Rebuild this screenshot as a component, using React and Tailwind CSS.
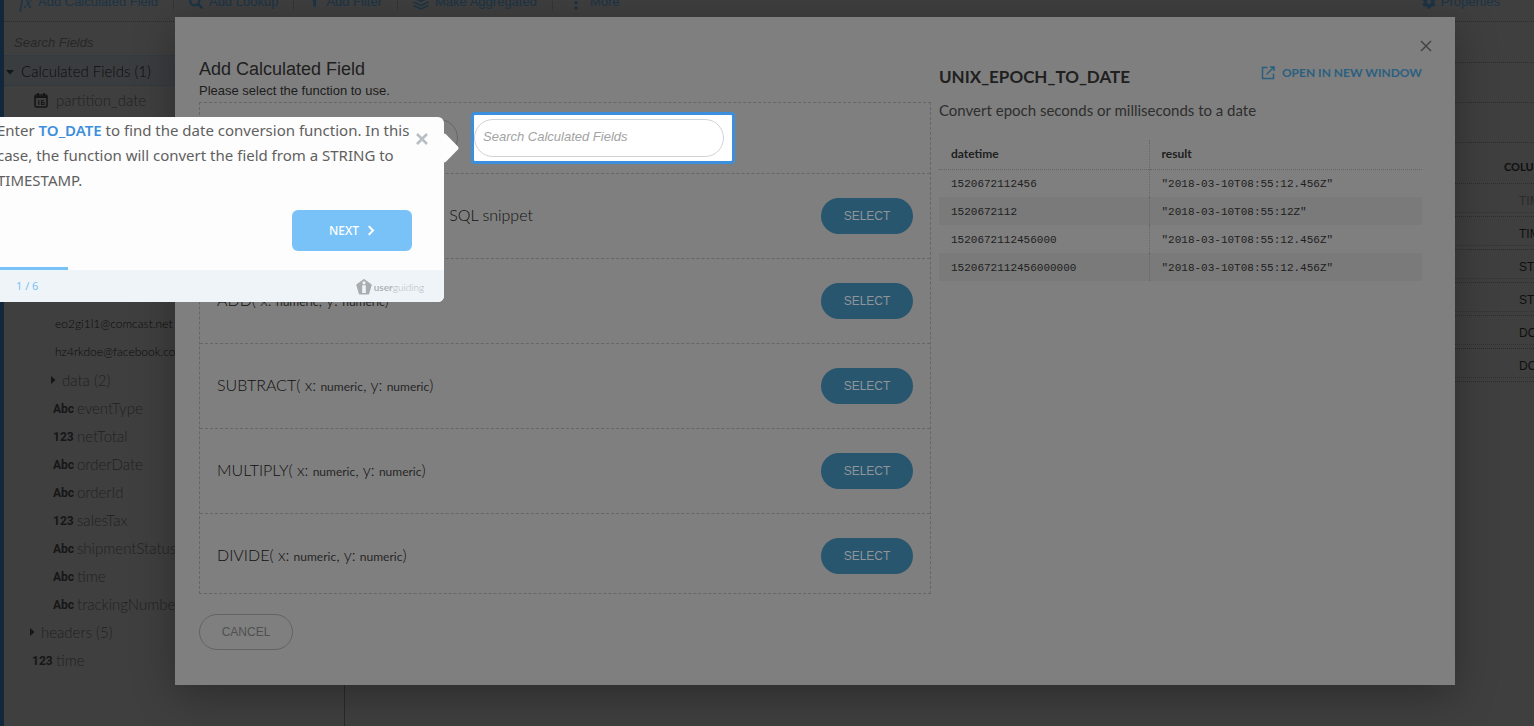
import React from "react";
import { FaCog, FaSearch, FaFilter } from "react-icons/fa";

const toolbarItems = [
  { label: "Add Calculated Field", icon: "fx" },
  { label: "Add Lookup", icon: "search" },
  { label: "Add Filter", icon: "filter" },
  { label: "Make Aggregated", icon: "layers" },
  { label: "More", icon: "more" },
];

const nestedFields = [
  { type: "Abc", name: "eventType" },
  { type: "123", name: "netTotal" },
  { type: "Abc", name: "orderDate" },
  { type: "Abc", name: "orderId" },
  { type: "123", name: "salesTax" },
  { type: "Abc", name: "shipmentStatus" },
  { type: "Abc", name: "time" },
  { type: "Abc", name: "trackingNumber" },
];

const columnTypes = ["TIMESTAMP", "STRING", "STRING", "DOUBLE", "DOUBLE"];

const functions = ["ADD", "SUBTRACT", "MULTIPLY", "DIVIDE"];

const samples = [
  ["1520672112456", '"2018-03-10T08:55:12.456Z"'],
  ["1520672112", '"2018-03-10T08:55:12Z"'],
  ["1520672112456000", '"2018-03-10T08:55:12.456Z"'],
  ["1520672112456000000", '"2018-03-10T08:55:12.456Z"'],
];

function ToolbarIcon({ name }) {
  if (name === "fx") {
    return <span className="font-['Liberation_Serif',serif] text-lg leading-none italic">fx</span>;
  }
  if (name === "search") return <FaSearch className="size-[14px]" />;
  if (name === "filter") return <FaFilter className="size-[11px]" />;
  if (name === "more") {
    return (
      <svg viewBox="0 0 16 16" className="size-4" fill="currentColor">
        <circle cx="8" cy="3" r="1.700" />
        <circle cx="8" cy="8.500" r="1.700" />
        <circle cx="8" cy="14" r="1.700" />
      </svg>
    );
  }
  return (
    <svg viewBox="0 0 16 16" className="size-4" fill="currentColor">
      <path d="M8 1 15.500 4.500 8 8 .5 4.500z" />
      <path d="M.5 7.200 8 10.700l7.500-3.500v1.500L8 12.200.5 8.700z" />
      <path d="M.5 10.700 8 14.200l7.500-3.500v1.500L8 15.700.5 12.200z" />
    </svg>
  );
}

function Toolbar() {
  return (
    <header className="-mt-[18px] flex h-10 shrink-0 items-center border-b border-dotted border-[#2c2c2c] pr-[34px] pl-[15px] text-[13px] text-[#1b3446]">
      {toolbarItems.map((item, i) => (
        <React.Fragment key={item.label}>
          {i > 0 && <span className="mx-[15px] h-4 border-l border-dotted border-[#2c2c2c]" />}
          <button type="button" className="flex items-center gap-[6px] whitespace-nowrap">
            <ToolbarIcon name={item.icon} />
            {item.label}
          </button>
        </React.Fragment>
      ))}
      <button type="button" className="ml-auto flex items-center gap-[5px]">
        <FaCog className="size-[14px]" />
        Properties
      </button>
    </header>
  );
}

function Field({ type, name, nested }) {
  return (
    <li className={nested ? "flex h-7 items-center gap-[3px] pl-[49px]" : "flex h-7 items-center gap-[3px] pl-7"}>
      <span className="w-[21px] pt-px font-[Roboto,sans-serif] text-[12px] font-bold text-[#161616]">{type}</span>
      <span>{name}</span>
    </li>
  );
}

function Caret({ down }) {
  return (
    <svg viewBox="0 0 8 8" className="size-2 shrink-0" fill="#161616">
      {down ? <path d="M0 2h8L4 6.500z" /> : <path d="M2 0v8l4.500-4z" />}
    </svg>
  );
}

function Sidebar() {
  return (
    <aside className="w-[341px] shrink-0 border-r border-[#2a2a2a] font-[Lato,sans-serif] text-[15px] font-light whitespace-nowrap text-[#1f1f1f]">
      <input
        type="search"
        aria-label="Search Fields"
        placeholder="Search Fields"
        className="block h-[34px] w-full border-b border-dotted border-[#2a3740] px-[10px] pt-2 font-['Liberation_Sans',sans-serif] text-[13px] font-normal italic placeholder:text-[#272727]"
      />
      <div className="flex h-[30px] items-center gap-[7px] border-b border-dotted border-[#2a3740] bg-[#3a3d3f] pt-[2px] pl-[2px] text-[#0c0c0c]">
        <Caret down />
        Calculated Fields (1)
      </div>
      <div className="flex h-7 items-center gap-2 pl-[30px]">
        <svg viewBox="0 0 14 15" className="h-[15px] w-[14px]" fill="none" stroke="#161616">
          <rect x="1" y="2" width="12" height="12" rx="1.500" strokeWidth="1.600" />
          <path d="M1 4h12M4 0v3M10 0v3" strokeWidth="2" />
          <path d="M4.800 7v5M7.500 7.500v4h2.500v-2H7.500M7.500 7.500H10" strokeWidth="1.100" />
        </svg>
        partition_date
      </div>
      <ul className="mt-[196px]">
        <li className="h-7 pl-[51px] text-[12px] leading-7 text-[#0c0c0c]">eo2gi1l1@comcast.net</li>
        <li className="h-7 pl-[51px] text-[12px] leading-7 text-[#0c0c0c]">hz4rkdoe@facebook.com</li>
        <li className="flex h-7 items-center gap-[5px] pl-[45px]">
          <Caret />
          data (2)
        </li>
        {nestedFields.map((f) => (
          <Field key={f.name} type={f.type} name={f.name} nested />
        ))}
        <li className="flex h-7 items-center gap-[5px] pl-6">
          <Caret />
          headers (5)
        </li>
        <Field type="123" name="time" />
      </ul>
    </aside>
  );
}

function ColumnPane() {
  return (
    <section className="min-w-0 flex-1">
      <div className="h-[41px] border-b border-dotted border-[#2c2c2c]" />
      <div className="h-10 border-b border-dotted border-[#2c2c2c]" />
      <div className="h-10 border-b border-dotted border-[#2c2c2c]" />
      <div className="ml-auto w-[79px] overflow-hidden text-[12px] whitespace-nowrap text-[#0f0f0f]">
        <div className="h-[41px] border-b border-dotted border-[#2c2c2c] pl-[49px] font-[Lato,sans-serif] text-[11px] leading-[48px] font-bold">
          COLUMNS
        </div>
        {["TIMESTAMP", ...columnTypes].map((t, i) => (
          <div key={i} className="h-[33px] border-b border-dotted border-[#2c2c2c]">
            <div
              className={
                i === 0
                  ? "h-[29px] border-b border-dotted border-[#323232] pl-16 leading-[35px] text-[#2a2a2a]"
                  : "h-[29px] border-b border-dotted border-[#323232] pl-16 leading-[35px]"
              }
            >
              {t}
            </div>
          </div>
        ))}
      </div>
    </section>
  );
}

function FunctionRow({ children }) {
  return (
    <li className="flex items-start justify-between border-b border-dashed border-[#666] px-[17px] py-6 last:border-b-0 last:pb-[19px]">
      <span className="font-[Lato,sans-serif] text-base leading-[34px] font-light text-[#101010]">{children}</span>
      <button type="button" className="h-9 w-[92px] rounded-full bg-[#28566f] text-[12px] text-[#8f9599]">
        SELECT
      </button>
    </li>
  );
}

function FunctionPicker() {
  return (
    <div className="min-w-0 flex-[732_1_0%]">
      <h1 className="text-lg leading-6 text-[#202020]">Add Calculated Field</h1>
      <p className="h-[21px] text-[13px] leading-5 text-[#1c1c1c]">Please select the function to use.</p>
      <div className="border border-dashed border-[#666]">
        <div className="flex h-[71px] items-center gap-[13px] border-b border-dashed border-[#666] pl-[17px]">
          <select aria-label="Function category" className="h-[38px] w-[241px] appearance-none rounded-full border border-[#666] px-3 text-[12px] text-[#262626]">
            <option>All</option>
          </select>
          <div className="rounded-sm border-[3px] border-[#3c8fdc] bg-white py-1 pr-2">
            <input
              type="search"
              aria-label="Search Calculated Fields"
              placeholder="Search Calculated Fields"
              className="block h-[38px] w-[250px] rounded-full border border-[#d0d3d5] bg-white px-2 pb-[3px] text-[13px] italic placeholder:text-[#a3a3a3]"
            />
          </div>
        </div>
        <ul>
          <FunctionRow>
            <span className="inline-block w-[316px] text-right">Write a custom SQL snippet</span>
          </FunctionRow>
          {functions.map((fn) => (
            <FunctionRow key={fn}>
              {fn}( x: <small className="text-[12px] font-normal text-[#262626]">numeric</small>, y:{" "}
              <small className="text-[12px] font-normal text-[#262626]">numeric</small>)
            </FunctionRow>
          ))}
        </ul>
      </div>
      <button type="button" className="mt-5 block h-9 w-[94px] rounded-full border border-[#636363] text-[12px] text-[#505050]">
        CANCEL
      </button>
    </div>
  );
}

function FunctionHelp() {
  return (
    <section className="min-w-0 flex-[483_1_0%] font-[Lato,sans-serif]">
      <div className="flex items-start justify-between">
        <h2 className="mt-2 text-[17px] leading-6 font-bold text-[#202020]">UNIX_EPOCH_TO_DATE</h2>
        <a href="#docs" className="flex items-center gap-[7px] text-[12px] leading-8 font-bold text-[#2b5f80]">
          <svg viewBox="0 0 14 14" className="size-[14px]" fill="none" stroke="currentColor" strokeWidth="1.500">
            <path d="M6.500 1.500h-5v11h11v-5M9 1h4v4M12.700 1.300 5.500 8.500" />
          </svg>
          OPEN IN NEW WINDOW
        </a>
      </div>
      <p className="mt-[11px] text-[15px] leading-5 text-[#2e2e2e]">Convert epoch seconds or milliseconds to a date</p>
      <table className="mt-5 w-full table-fixed border-collapse text-left text-[11px] text-[#202020]">
        <colgroup>
          <col className="w-[210px]" />
          <col />
        </colgroup>
        <thead>
          <tr className="h-[29px] border-b border-dotted border-[#666] text-[12px]">
            <th className="border-r border-dotted border-[#666] px-3 font-bold">datetime</th>
            <th className="px-3 font-bold">result</th>
          </tr>
        </thead>
        <tbody className="font-['Liberation_Mono',monospace]">
          {samples.map(([input, result]) => (
            <tr key={input} className="h-7 even:bg-[#7a7a7a]">
              <td className="border-r border-dotted border-[#666] px-3 pt-[2px]">{input}</td>
              <td className="px-3 pt-[2px]">{result}</td>
            </tr>
          ))}
        </tbody>
      </table>
    </section>
  );
}

function Modal() {
  return (
    <div className="absolute inset-0 pt-[17px] pr-[79px] pl-[175px]">
      <div
        role="dialog"
        aria-label="Add Calculated Field"
        className="relative flex gap-2 bg-[#7f7f7f] pt-10 pr-[33px] pb-[35px] pl-6 shadow-[0_10px_40px_rgba(0,0,0,0.3)]"
      >
        <button type="button" aria-label="Close" className="absolute top-[23px] right-[23px]">
          <svg viewBox="0 0 12 12" className="size-3" stroke="#444" strokeWidth="1.500">
            <path d="M1 1l10 10M11 1 1 11" />
          </svg>
        </button>
        <FunctionPicker />
        <FunctionHelp />
      </div>
    </div>
  );
}

function Guide() {
  return (
    <div className="absolute top-[117px] -left-[7px] w-[451px] font-['Noto_Sans',sans-serif]">
      <div className="absolute top-[20px] -right-[11px] size-[22px] rotate-45 rounded-[3px] bg-[#fdfdfd]" />
      <div className="relative overflow-hidden rounded-md bg-[#fdfdfd] pt-px">
        <p className="pl-1 text-[15px] leading-[25px] whitespace-nowrap text-[#606060]">
          Enter <strong className="font-semibold text-[#3c8fdc]">TO_DATE</strong> to find the date conversion function. In this
          <br />
          case, the function will convert the field from a STRING to
          <br />
          TIMESTAMP.
        </p>
        <button type="button" aria-label="Close guide" className="absolute top-4 right-4">
          <svg viewBox="0 0 12 12" className="size-3" stroke="#b9bec2" strokeWidth="2.600">
            <path d="M1 1l10 10M11 1 1 11" />
          </svg>
        </button>
        <button
          type="button"
          className="mt-[17px] mr-8 ml-auto flex h-[41px] w-[120px] items-center justify-center gap-2 rounded-md bg-[#79c2f7] text-[12px] font-medium text-white"
        >
          NEXT
          <svg viewBox="0 0 8 12" className="h-[11px] w-2" fill="none" stroke="currentColor" strokeWidth="2.200">
            <path d="M1.500 1.200 6.200 6l-4.700 4.800" />
          </svg>
        </button>
        <div className="mt-4 h-[3px] w-1/6 bg-[#79c2f7]" />
        <div className="flex h-8 items-center justify-between bg-[#eff4f8] pr-5 pl-[23px]">
          <span className="text-[11px] text-[#79c2f7]">1 / 6</span>
          <span className="flex items-center gap-[2px] pt-[2px] font-[Lato,sans-serif] text-[10px] text-[#b0b4b7]">
            <svg viewBox="0 0 16 16" className="size-4">
              <path
                d="M8 1 14.800 6 12.300 14.500H3.700L1.200 6z"
                fill="#a9adb0"
                stroke="#a9adb0"
                strokeWidth="1.800"
                strokeLinejoin="round"
              />
              <circle cx="8" cy="3.800" r="1.600" fill="#eff4f8" />
              <path d="M6.200 6.200h3.600V14H6.200z" fill="#eff4f8" />
            </svg>
            <span>
              <b className="font-bold">user</b>
              <span className="font-light">guiding</span>
            </span>
          </span>
        </div>
      </div>
    </div>
  );
}

export default function App() {
  return (
    <div className="relative flex h-screen overflow-hidden bg-[#3f3f3f] font-['Liberation_Sans',sans-serif]">
      <div className="w-1 shrink-0 bg-[#12273a]" />
      <div className="flex min-w-0 flex-1 flex-col">
        <Toolbar />
        <div className="flex min-h-0 flex-1">
          <Sidebar />
          <ColumnPane />
        </div>
      </div>
      <div className="absolute inset-0">
        <Modal />
        <Guide />
      </div>
    </div>
  );
}
